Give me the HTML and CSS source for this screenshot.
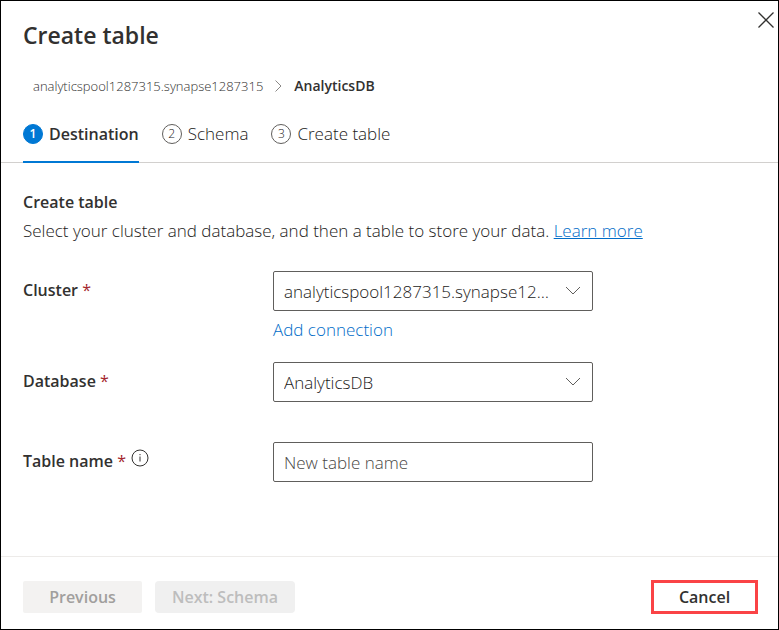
FILE: index.html
```html
<!DOCTYPE html>
<html lang="en">
<head>
<meta charset="utf-8">
<title>Create table</title>
<link rel="stylesheet" href="styles.css">
</head>
<body>
<main class="panel">
  <button class="close" type="button" aria-label="Close">
    <svg width="16" height="16" viewBox="0 0 16 16"><path d="M0.5 0.5l15 15M15.5 0.5l-15 15"/></svg>
  </button>
  <header class="header">
    <h1 class="title">Create table</h1>
    <nav class="breadcrumb" aria-label="Location">
      <span class="crumb">analyticspool1287315.synapse1287315</span>
      <svg class="separator" width="7" height="12" viewBox="0 0 7 12"><path d="M0.5 0.5L6 6L0.5 11.5"/></svg>
      <span class="crumb-current">AnalyticsDB</span>
    </nav>
  </header>
  <nav class="steps" aria-label="Steps">
    <button class="step step-active" type="button"><span class="number">1</span><span>Destination</span></button>
    <button class="step" type="button"><span class="number">2</span><span>Schema</span></button>
    <button class="step" type="button"><span class="number">3</span><span>Create table</span></button>
  </nav>
  <section class="content">
    <h2 class="subtitle">Create table</h2>
    <p class="intro">Select your cluster and database, and then a table to store your data. <a class="link underlined" href="#">Learn more</a></p>
    <form class="form">
      <div class="row">
        <label class="label" for="cluster">Cluster <span class="required">*</span></label>
        <div class="field">
          <div class="select-box">
            <select class="control select" id="cluster"><option>analyticspool1287315.synapse1287315</option></select>
            <svg class="chevron" width="16" height="9" viewBox="0 0 16 9"><path d="M1 1l7 7l7-7"/></svg>
          </div>
          <a class="link add" href="#">Add connection</a>
        </div>
      </div>
      <div class="row">
        <label class="label" for="database">Database <span class="required">*</span></label>
        <div class="field">
          <div class="select-box">
            <select class="control select" id="database"><option>AnalyticsDB</option></select>
            <svg class="chevron" width="16" height="9" viewBox="0 0 16 9"><path d="M1 1l7 7l7-7"/></svg>
          </div>
        </div>
      </div>
      <div class="row">
        <label class="label" for="table">Table name <span class="required">*</span>
          <svg class="info" width="18" height="18" viewBox="0 0 18 18"><circle cx="9" cy="9" r="8"/><path d="M9 7.5v5M9 5v1.2"/></svg>
        </label>
        <div class="field">
          <input class="control" id="table" type="text" placeholder="New table name">
        </div>
      </div>
    </form>
  </section>
  <footer class="footer">
    <button class="button previous" type="button" disabled>Previous</button>
    <button class="button next" type="button" disabled>Next: Schema</button>
    <button class="button cancel" type="button">Cancel</button>
  </footer>
</main>
</body>
</html>
```
FILE: styles.css
```css
* {
  box-sizing: border-box;
}

body {
  margin: 0;
  color: #1b1a19;
  font: 300 17px/24px "Open Sans", "Noto Sans", sans-serif;
}

button,
input,
select {
  margin: 0;
  color: inherit;
  font: inherit;
}

h1,
h2,
p {
  margin: 0;
}

svg {
  fill: none;
  stroke: #605e5c;
}

.panel {
  position: relative;
  display: flex;
  flex-direction: column;
  min-height: 100vh;
  border: 1px solid #000;
  background: #fff;
}

.close {
  position: absolute;
  top: 11px;
  right: 4px;
  display: flex;
  padding: 0;
  border: 0;
  background: none;
}

.close svg {
  stroke: #323130;
  stroke-width: 1.3;
}

.header {
  padding: 18px 22px 0;
}

.title {
  color: #323130;
  font-size: 23px;
  font-weight: 600;
  line-height: 32px;
}

.breadcrumb {
  display: flex;
  align-items: center;
  gap: 12px;
  margin-top: 25px;
  padding-left: 10px;
  font-size: 14px;
  line-height: 20px;
}

.crumb {
  color: #323130;
  font-size: 13px;
}

.separator {
  stroke: #8a8886;
}

.crumb-current {
  color: #323130;
  font-weight: 600;
}

.steps {
  display: flex;
  gap: 23px;
  margin-top: 23px;
  padding: 0 22px;
  border-bottom: 1px solid #d2d0ce;
}

.step {
  display: flex;
  align-items: center;
  gap: 6px;
  margin-bottom: -1px;
  padding: 3px 0 15px;
  border: 0;
  border-bottom: 2px solid transparent;
  background: none;
}

.step-active {
  border-color: #0078d4;
  color: #323130;
  font-size: 16px;
  font-weight: 600;
}

.number {
  width: 20px;
  height: 20px;
  border: 1px solid #605e5c;
  border-radius: 50%;
  font-size: 12px;
  line-height: 18px;
  text-align: center;
}

.step-active .number {
  border-color: #0078d4;
  background: #0078d4;
  color: #fff;
}

.content {
  flex: 1;
  padding: 27px 22px 0;
}

.subtitle {
  color: #323130;
  font-size: 16px;
  font-weight: 600;
  line-height: 24px;
}

.intro {
  margin-top: 5px;
}

.link {
  color: #006cc8;
  text-decoration: none;
}

.underlined {
  text-decoration: underline;
}

.form {
  display: grid;
  gap: 40px;
  margin-top: 28px;
}

.row {
  display: grid;
  grid-template-columns: 250px minmax(0, 320px);
}

.row:first-child {
  margin-bottom: -20px;
}

.label {
  padding-top: 7px;
  color: #323130;
  font-size: 16px;
  font-weight: 600;
}

.required {
  color: #a4262c;
  font-weight: 400;
}

.info {
  margin-left: 1px;
  vertical-align: 0;
  stroke: #323130;
}

.select-box {
  position: relative;
}

.control {
  display: block;
  width: 100%;
  height: 40px;
  padding: 0 10px;
  border: 1px solid #605e5c;
  border-radius: 2px;
  background: #fff;
}

.control::placeholder {
  color: #484644;
  opacity: 1;
}

.select {
  padding: 2px 40px 0 10px;
  appearance: none;
  text-overflow: ellipsis;
}

.chevron {
  position: absolute;
  top: 15px;
  right: 12px;
  pointer-events: none;
}

.add {
  display: block;
  width: fit-content;
  margin-top: 7px;
}

.footer {
  display: flex;
  align-items: center;
  gap: 13px;
  padding: 23px 20px 15px 22px;
  border-top: 1px solid #edebe9;
}

.button {
  height: 32px;
  padding: 0 15px;
  border: 0;
  border-radius: 2px;
  font-size: 16px;
  font-weight: 600;
}

.previous {
  min-width: 119px;
  background: #f3f2f1;
  color: #a19f9d;
}

.next {
  min-width: 140px;
  border-radius: 4px;
  background: #f0f0f0;
  color: #bdbdbd;
}

.cancel {
  min-width: 107px;
  height: 34px;
  margin-left: auto;
  border: 3px solid #fa4346;
  border-radius: 0;
  background: #fff;
  color: #323130;
}
```
